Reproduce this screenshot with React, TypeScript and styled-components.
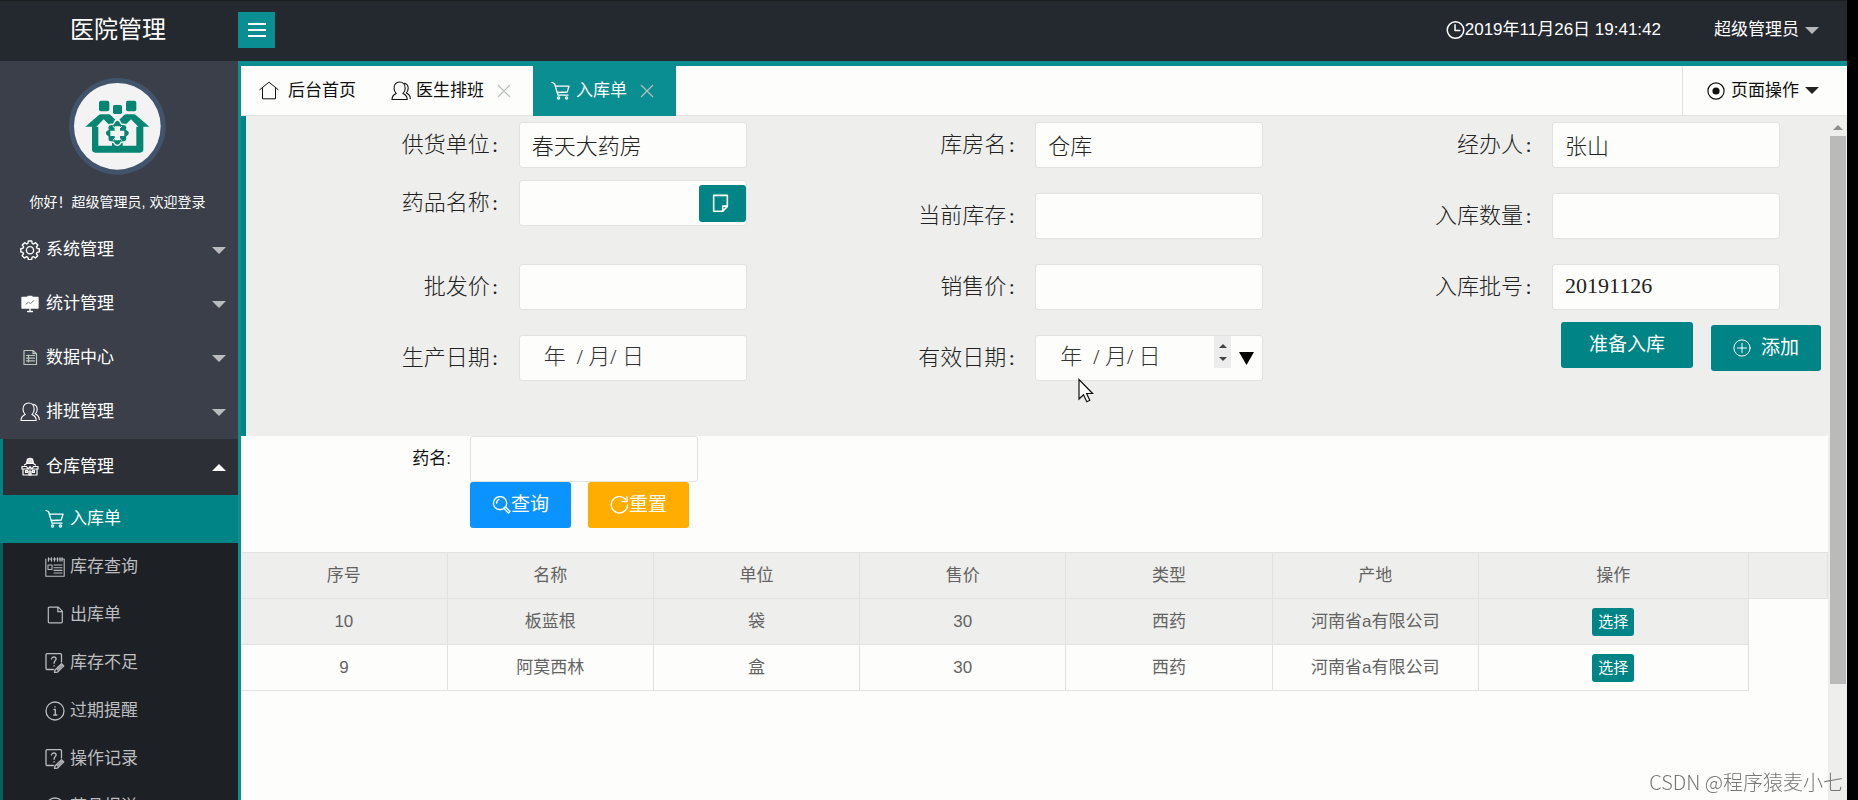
import React from 'react';
import styled, { createGlobalStyle } from 'styled-components';

const sans = '"Liberation Sans", "Noto Sans CJK SC", sans-serif';
const song = '"Liberation Serif", "Noto Sans CJK SC", serif';
const teal = '#008486';
const tealBright = '#0b8e92';
const paper = '#fdfdfb';
const panel = '#eeeeec';
const line = '#e2e2e0';

const GlobalStyle = createGlobalStyle`
  * { box-sizing: border-box; }
  body { margin: 0; background: #000; font-family: ${sans}; font-size: 17px; line-height: 24px; }
  button, input { font: inherit; margin: 0; }
  a { color: inherit; text-decoration: none; }
  svg { display: block; flex: none; }
`;

/* ---------- shell ---------- */

const Page = styled.div`
  display: flex;
  flex-direction: column;
  height: 100vh;
  overflow: hidden;
  border-right: 11px solid #000;
  background: ${paper};
`;

const Header = styled.header`
  display: flex;
  align-items: center;
  flex: none;
  height: 61px;
  padding-bottom: 2px;
  background: #24282f;
  border-top: 1px solid #1b1d20;
  color: #fff;
`;

const Brand = styled.h1`
  width: 238px;
  margin: 0;
  padding-right: 2px;
  font-size: 24px;
  line-height: 32px;
  font-weight: 400;
  text-align: center;
`;

const MenuToggle = styled.button`
  display: grid;
  place-items: center;
  width: 37px;
  height: 36px;
  padding: 0;
  border: 0;
  background: ${tealBright};
  color: #fff;
`;

const HeaderRight = styled.div`
  display: flex;
  align-items: center;
  margin-left: auto;
  padding-right: 28px;
  gap: 53px;
`;

const Clock = styled.time`
  display: flex;
  align-items: center;
`;

const Caret = styled.span<{ $up?: boolean; $color: string }>`
  width: 0;
  height: 0;
  border: 7px solid transparent;
  ${p => (p.$up
    ? `border-top-width: 0; border-bottom-color: ${p.$color};`
    : `border-bottom-width: 0; border-top-color: ${p.$color};`)}
`;

const PlainButton = styled.button`
  display: flex;
  align-items: center;
  gap: 6px;
  padding: 0;
  border: 0;
  background: none;
  color: inherit;
`;

const Body = styled.div`
  display: flex;
  flex: 1;
  min-height: 0;
`;

/* ---------- sidebar ---------- */

const Sidebar = styled.aside`
  flex: none;
  width: 238px;
  overflow: hidden;
  background: #3a3f49;
  color: #fff;
`;

const Profile = styled.div`
  display: flex;
  flex-direction: column;
  align-items: center;
  height: 162px;
  padding: 17px 3px 0 0;
  font-size: 14px;
`;

const Greeting = styled.p`
  margin: 15px 0 0;
`;

const Nav = styled.nav`
  display: flex;
  flex-direction: column;
`;

const NavItem = styled.a<{ $open?: boolean }>`
  display: flex;
  align-items: center;
  height: ${p => (p.$open ? 56 : 54)}px;
  gap: 6px;
  padding: 0 12px 0 ${p => (p.$open ? 17 : 20)}px;
  ${p => p.$open && `background: #2c2f35; border-left: 3px solid ${teal};`}

  ${Caret} { margin-left: auto; }
`;

const SubNav = styled.div`
  background: #1d2024;
  border-left: 3px solid #006261;
`;

const SubItem = styled.a<{ $active?: boolean }>`
  display: flex;
  align-items: center;
  height: 48px;
  gap: 5px;
  margin-left: ${p => (p.$active ? -3 : 0)}px;
  padding-left: ${p => (p.$active ? 45 : 42)}px;
  background: ${p => (p.$active ? teal : 'transparent')};
  color: ${p => (p.$active ? '#fff' : '#bcbdbf')};
`;

/* ---------- main ---------- */

const Main = styled.main`
  display: flex;
  flex-direction: column;
  flex: 1;
  min-width: 0;
  border-top: 5px solid ${tealBright};
  border-left: 3px solid ${tealBright};
`;

const TabBar = styled.div`
  display: flex;
  flex: none;
  height: 50px;
  border-bottom: 1px solid ${line};
`;

const Tab = styled.div<{ $active?: boolean; $home?: boolean }>`
  display: flex;
  align-items: center;
  gap: ${p => (p.$home ? 9 : 5)}px;
  height: 50px;
  padding: 0 ${p => (p.$home ? 17 : 22)}px 0 18px;
  background: ${p => (p.$active ? tealBright : 'transparent')};
  color: ${p => (p.$active ? '#fff' : '#111')};
`;

const TabClose = styled.button`
  display: grid;
  margin-left: 8px;
  padding: 0;
  border: 0;
  background: none;
  color: #b9bdbd;
`;

const PageActions = styled.div`
  display: flex;
  align-items: center;
  margin-left: auto;
  padding: 0 28px 0 24px;
  border-left: 1px solid ${line};
  color: #111;
`;

const Frame = styled.div`
  display: flex;
  flex: 1;
  min-height: 0;
`;

const Content = styled.div`
  flex: 1;
  min-width: 0;
  overflow: hidden;
`;

const ScrollTrack = styled.div`
  flex: none;
  display: flex;
  flex-direction: column;
  align-items: center;
  width: 19px;
  padding-top: 9px;
  background: ${panel};
  color: #8e8e8e;
`;

const ScrollThumb = styled.div`
  width: 16px;
  height: 548px;
  margin-top: 6px;
  background: #bababa;
`;

/* ---------- stock-in form ---------- */

const StockForm = styled.form`
  display: grid;
  grid-template-columns: repeat(3, 1fr);
  height: 320px;
  padding: 6px 17px 0 15px;
  border-left: 5px solid ${teal};
  border-bottom-right-radius: 3px;
  background: ${panel};
  font-family: ${song};
  font-size: 22px;
  line-height: 30px;
  font-weight: 300;
  color: #222;
`;

const FormColumn = styled.div`
  display: flex;
  flex-direction: column;
  align-items: flex-end;
  padding-right: 31px;
`;

const Field = styled.div<{ $gap?: number }>`
  position: relative;
  display: flex;
  align-items: center;
  height: 46px;
  margin-bottom: ${p => p.$gap ?? 25}px;
`;

const FieldLabel = styled.label`
  display: flex;
  padding-right: 18px;
`;

const Colon = styled.span`
  width: 11px;
  text-align: center;
`;

const InputBox = styled.div`
  display: flex;
  align-items: center;
  width: 228px;
  height: 46px;
  border: 1px solid ${line};
  border-radius: 3px;
  background: ${paper};
`;

const TextInput = styled.input<{ $indent?: number }>`
  flex: 1;
  min-width: 0;
  height: 44px;
  padding: 0 0 3px ${p => p.$indent ?? 12}px;
  border: 0;
  outline: 0;
  background: none;
  color: #222;

  &::placeholder { color: #333; opacity: 1; }
`;

const PickButton = styled.button`
  display: grid;
  place-items: center;
  width: 47px;
  height: 37px;
  padding: 0 3px 0 0;
  border: 0;
  border-radius: 3px;
  background: ${teal};
  color: #fff;
`;

const Stepper = styled.div`
  display: flex;
  flex-direction: column;
  align-items: center;
  align-self: flex-start;
  justify-content: space-around;
  width: 17px;
  height: 32px;
  padding: 3px 0;
  background: #ececec;
`;

const StepButton = styled.button`
  display: grid;
  padding: 2px;
  border: 0;
  background: none;
  color: #444;
`;

const DateDrop = styled.button`
  display: grid;
  margin: 0 8px;
  padding: 0;
  border: 0;
  background: none;
  color: #000;
`;

const Pointer = styled.svg`
  position: absolute;
  right: 168px;
  top: 43px;
`;

const FormActions = styled.div`
  display: flex;
  align-items: center;
  gap: 18px;
  margin: -16px -41px 0 0;
`;

const Button = styled.button<{ $bg: string; $width: number; $gap?: number; $drop?: boolean }>`
  display: flex;
  align-items: center;
  justify-content: center;
  gap: ${p => p.$gap ?? 0}px;
  width: ${p => p.$width}px;
  height: 46px;
  margin-top: ${p => (p.$drop ? 6 : 0)}px;
  padding: 0;
  border: 0;
  border-radius: 3px;
  background: ${p => p.$bg};
  color: #fff;
  font-family: ${sans};
  font-size: 19px;
  font-weight: 400;
  line-height: 26px;
`;

/* ---------- search + table ---------- */

const SearchForm = styled.form`
  display: grid;
  grid-template-columns: 210px auto;
  justify-content: start;
  column-gap: 19px;
  padding-bottom: 24px;
`;

const SearchLabel = styled.label`
  align-self: center;
  text-align: right;
  color: #111;
`;

const SearchButtons = styled.div`
  grid-column: 2;
  display: flex;
  gap: 17px;
`;

const Table = styled.table`
  width: 100%;
  table-layout: fixed;
  border-collapse: collapse;
  color: #636363;
  text-align: center;
`;

const Cell = styled.td`
  height: 46px;
  padding: 0;
  border: 1px solid ${line};
  border-left-width: 0;
`;

const HeadCell = styled(Cell).attrs({ as: 'th' })`
  font-weight: 400;
  background: ${panel};
`;

const Row = styled.tr<{ $shade?: boolean }>`
  background: ${p => (p.$shade ? panel : 'transparent')};
`;

const BlankCell = styled.td`
  background: ${paper};
`;

const SelectButton = styled.button`
  width: 42px;
  height: 28px;
  padding: 0;
  border: 0;
  border-radius: 3px;
  background: ${teal};
  color: #fff;
  font-size: 15px;
  line-height: 28px;
  vertical-align: middle;
`;

const Watermark = styled.div`
  position: fixed;
  right: 15px;
  bottom: 4px;
  font-family: "Noto Sans CJK SC", sans-serif;
  font-size: 20px;
  line-height: 28px;
  font-weight: 300;
  color: #777;
`;

/* ---------- icons ---------- */

type IconProps = { size?: number; w?: number; children: React.ReactNode };
const Icon = ({ size = 20, w = 1.3, children }: IconProps) => (
  <svg width={size} height={size} viewBox="0 0 20 20" fill="none" stroke="currentColor" strokeWidth={w} strokeLinejoin="round" strokeLinecap="round" aria-hidden="true">
    {children}
  </svg>
);

const GearIcon = () => (
  <Icon w={1.4}>
    <path d="M8.300 1h3.400l.5 2.400 1.300.6 2.100-1.300 2.200 2.300-1.300 2 .6 1.400 2.200.4v3.100l-2.300.5-.6 1.300 1.300 2.100-2.300 2.200-2-1.300-1.300.6-.5 2.300H8.400l-.5-2.300-1.400-.6-2 1.300-2.300-2.300 1.300-2-.6-1.300L.8 11.900V8.700l2.200-.5.6-1.300-1.300-2L4.600 2.700l2 1.300 1.300-.6z" />
    <circle cx="10" cy="10.200" r="3.600" />
  </Icon>
);
const BoardIcon = () => (
  <Icon>
    <path d="M2 3.500h16v10.500H2z" fill="currentColor" />
    <path d="M8 2.500h4" />
    <path d="M10 14v3.500M7.500 17.500h5" />
    <path d="M6 10.200l2.500-2 2 1.400L14 6.500" stroke="#777" strokeWidth="1" />
  </Icon>
);
const SheetIcon = () => (
  <Icon w={1.2}>
    <g stroke="#b9c4bd">
      <path d="M4 2.500h9l3.500 3.200v10.800H4zM13 2.500v3.200h3.500" />
      <path d="M6.500 7.500h8M6.500 10.200h8M6.500 12.900h8M8.500 7v7" />
    </g>
  </Icon>
);
const PeopleIcon = () => (
  <Icon w={1.1}>
    <path d="M1 18.500c0-3.300 1.300-4.700 4.300-5.900C3.800 11.200 3 9.500 3 7.300 3 3.500 5.300 1 8.600 1s5.600 2.500 5.600 6.300c0 2.200-.8 3.900-2.300 5.300 3 1.200 4.300 2.600 4.300 5.900z" />
    <path d="M13.500 2.200c2.500.7 3.700 2.600 3.700 5.100 0 2-.7 3.500-1.900 4.600 2.700 1.100 4 2.600 4 5.600" />
  </Icon>
);
const StoreIcon = () => (
  <Icon w={1.200}>
    <path d="M7.500 2l2.500-.8 2.500.8 1 4.500h-7z" fill="#ddd" />
    <path d="M4.500 8l2-1.500h7l2 1.500M2 9.500h4.500L8 12l2-2.500 2 2.500 1.500-2.500H18v2.500H2zM3 12v6h14v-6" />
    <path d="M5.500 13.500h2v2h-2zM12.500 13.500h2v2h-2zM9 14h2v4H9z" fill="#999" />
  </Icon>
);
const CartIcon = ({ size = 20 }: { size?: number }) => (
  <Icon size={size} w={1.300}>
    <path d="M1 1.500l2.500 1 3.500 11.700h10M4.500 5.200H18l-1.800 5.800-10 .5" />
    <circle cx="7.500" cy="17" r="1.100" />
    <circle cx="15.500" cy="17" r="1.100" />
  </Icon>
);
const LedgerIcon = () => (
  <Icon w={1.100}>
    <path d="M.8 2v17.200h18.400V2H17M3.500 2h2M8.500 2h2.500M14 2h1" />
    <path d="M3.500 1v3M6.500 1v3M9.500 1v3M12.500 1v3M15 1v3M17 1v3" strokeWidth="1.300" />
    <path d="M3 8h4v4.500H3zM9 8h8M9 10.700h8M9 13.400h8M9 16h8" />
  </Icon>
);
const FileIcon = () => (
  <Icon w={1.200}>
    <path d="M4.300 2.200h9l4 4v10.600c0 .6-.4 1-1 1h-12c-.6 0-1-.4-1-1V3.200c0-.6.400-1 1-1zM12.800 2.500v4.200h4.200" />
  </Icon>
);
const QuestionIcon = () => (
  <Icon w={1.300}>
    <path d="M8.500 16.500H2c-.6 0-1-.4-1-1V1.700c0-.6.400-1 1-1h13.500c.6 0 1 .4 1 1V9M6.500 6c.2-1.400 1-2 2.300-2 1.400 0 2.300.8 2.300 2 0 1.600-2 1.900-2 3.700v.6M9.100 12.700v.4" />
    <path d="M10 17l6.500-6.300 2.300 2.200-6.500 6.300-2.800.3zM12.500 16.800l4.500-4.300" />
  </Icon>
);
const InfoIcon = () => (
  <Icon w={1.300}>
    <circle cx="10" cy="10" r="9" />
    <path d="M9 8.500h1.300v5.500M8.700 14h3.200M10 5.700v.3" />
  </Icon>
);
const HomeIcon = () => (
  <Icon w={1}>
    <path d="M.8 8.700L10 1.200l9.200 7.500M3.500 7.500v10.300h13V7.500" />
  </Icon>
);
const CloseIcon = () => (
  <svg width="14" height="14" viewBox="0 0 14 14" fill="none" stroke="currentColor" strokeWidth="1.200" aria-hidden="true">
    <path d="M1 1l12 12M13 1l-12 12" />
  </svg>
);
const ClockIcon = () => (
  <Icon size={19} w={1.600}>
    <circle cx="10" cy="9.500" r="8.700" />
    <path d="M9.500 4v6h5" />
  </Icon>
);
const TargetIcon = () => (
  <Icon size={18} w={1.300}>
    <circle cx="10" cy="10" r="9" />
    <circle cx="10" cy="10" r="4" fill="currentColor" stroke="none" />
  </Icon>
);
const BarsIcon = () => (
  <svg width="18" height="16" viewBox="0 0 18 16" fill="none" stroke="currentColor" strokeWidth="2" aria-hidden="true">
    <path d="M0 2h18M0 8h18M0 14h18" />
  </svg>
);
const NoteIcon = () => (
  <Icon size={19} w={1.700}>
    <path d="M2.800 1.500h14.400v11.500l-4.700 5.200H2.800zM17 12.800h-4.600v5" />
  </Icon>
);
const PlusIcon = () => (
  <Icon size={18} w={1.100}>
    <circle cx="10" cy="10" r="9" />
    <path d="M10 5v10M5 10h10" />
  </Icon>
);
const SearchIcon = () => (
  <Icon size={19} w={1.400}>
    <circle cx="8.500" cy="7.500" r="7" />
    <path d="M4.800 7.500c0-2 .9-3.300 2.500-4M13 12.200l1-.8 5 4.800-1.700 1.700-4.500-4.600z" />
  </Icon>
);
const RefreshIcon = () => (
  <Icon size={19} w={1.500}>
    <path d="M18.500 9.500A8.600 8.600 0 1 1 16.300 3.500M18 .8v5h-5.200" />
  </Icon>
);
const Triangle = ({ w, h, up }: { w: number; h: number; up?: boolean }) => (
  <svg width={w} height={h} viewBox="0 0 10 10" preserveAspectRatio="none" fill="currentColor" aria-hidden="true">
    <path d={up ? 'M0 10h10L5 0z' : 'M0 0h10L5 10z'} />
  </svg>
);

const Avatar = () => (
  <svg width="97" height="97" viewBox="9 11 291 291" role="img" aria-label="头像">
    <circle cx="154" cy="156" r="145" fill="#41546b" />
    <circle cx="154" cy="156" r="130" fill="#f3f3f3" />
    <g fill="#048673">
      <rect x="99" y="79" width="31" height="32" rx="6" />
      <rect x="141" y="92" width="27" height="27" rx="5" />
      <rect x="180" y="79" width="31" height="32" rx="6" />
      <path d="M58 157l38-33q4-4 12-4h18q6 0 10 4l18 18 18-18q4-4 10-4h20q6 0 10 4l38 33h-18v68q0 10-10 10H88q-10 0-10-10v-68z" />
    </g>
    <g fill="#f3f3f3">
      <path d="M91 157l22-22 20 20-13 22 18 30v7H97v-57z" />
      <path d="M217 157l-22-22-20 20 13 22-18 30v7h41v-57z" />
      <path d="M136 119h36l-18 20z" />
    </g>
    <path d="M154 137q7 0 10 9l3 4q14-2 16 8l-1 8q12 5 7 15l-7 7q3 14-9 15l-8 1q-3 9-11 9t-11-9l-8-1q-12-1-9-15l-7-7q-5-10 7-15l-1-8q2-10 16-8l3-4q3-9 10-9z" fill="#048673" stroke="#f3f3f3" strokeWidth="4" />
    <path d="M146 156h16v13h13v16h-13v13h-16v-13h-13v-16h13z" fill="#f3f3f3" />
    <path d="M140 155l8 8M168 155l-8 8M140 199l8-8M168 199l-8-8" stroke="#f3f3f3" strokeWidth="3" />
  </svg>
);

/* ---------- data ---------- */

const menu = [
  { name: '系统管理', icon: <GearIcon /> },
  { name: '统计管理', icon: <BoardIcon /> },
  { name: '数据中心', icon: <SheetIcon /> },
  { name: '排班管理', icon: <PeopleIcon /> },
];

const subMenu = [
  { name: '入库单', icon: <CartIcon />, active: true },
  { name: '库存查询', icon: <LedgerIcon /> },
  { name: '出库单', icon: <FileIcon /> },
  { name: '库存不足', icon: <QuestionIcon /> },
  { name: '过期提醒', icon: <InfoIcon /> },
  { name: '操作记录', icon: <QuestionIcon /> },
  { name: '药品报溢', icon: <InfoIcon /> },
];

const widths = ['13%', '13%', '13%', '13%', '13%', '13%', '17%', '5%'];
const heads = ['序号', '名称', '单位', '售价', '类型', '产地', '操作'];
const rows = [
  ['10', '板蓝根', '袋', '30', '西药', '河南省a有限公司'],
  ['9', '阿莫西林', '盒', '30', '西药', '河南省a有限公司'],
];

type FormFieldProps = {
  id: string;
  label: string;
  value?: string;
  gap?: number;
  date?: boolean;
  after?: React.ReactNode;
  over?: React.ReactNode;
};

const FormField = ({ id, label, value, gap, date, after, over }: FormFieldProps) => (
  <Field $gap={gap}>
    <FieldLabel htmlFor={id}>{label}<Colon>:</Colon></FieldLabel>
    <InputBox>
      <TextInput id={id} defaultValue={value} $indent={date ? 24 : 12} placeholder={date ? '年  / 月/ 日' : undefined} />
      {after}
    </InputBox>
    {over}
  </Field>
);

export default function App() {
  return (
    <Page>
      <GlobalStyle />
      <Header>
        <Brand>医院管理</Brand>
        <MenuToggle type="button" aria-label="折叠菜单"><BarsIcon /></MenuToggle>
        <HeaderRight>
          <Clock><ClockIcon />2019年11月26日 19:41:42</Clock>
          <PlainButton type="button">超级管理员<Caret $color="#b5b7ba" /></PlainButton>
        </HeaderRight>
      </Header>
      <Body>
        <Sidebar>
          <Profile>
            <Avatar />
            <Greeting>你好！超级管理员, 欢迎登录</Greeting>
          </Profile>
          <Nav>
            {menu.map(m => (
              <NavItem key={m.name} href="#">{m.icon}{m.name}<Caret $color="#b9bbbe" /></NavItem>
            ))}
            <NavItem href="#" $open><StoreIcon />仓库管理<Caret $up $color="#fff" /></NavItem>
            <SubNav>
              {subMenu.map(s => (
                <SubItem key={s.name} href="#" $active={s.active}>{s.icon}{s.name}</SubItem>
              ))}
            </SubNav>
          </Nav>
        </Sidebar>
        <Main>
          <TabBar>
            <Tab $home><HomeIcon />后台首页</Tab>
            <Tab><PeopleIcon />医生排班<TabClose type="button" aria-label="关闭"><CloseIcon /></TabClose></Tab>
            <Tab $active><CartIcon />入库单<TabClose type="button" aria-label="关闭"><CloseIcon /></TabClose></Tab>
            <PageActions>
              <PlainButton type="button"><TargetIcon />页面操作<Caret $color="#222" /></PlainButton>
            </PageActions>
          </TabBar>
          <Frame>
            <Content>
              <StockForm onSubmit={e => e.preventDefault()}>
                <FormColumn>
                  <FormField id="supplier" label="供货单位" value="春天大药房" gap={12} />
                  <FormField
                    id="drug"
                    label="药品名称"
                    gap={38}
                    after={<PickButton type="button" aria-label="选择药品"><NoteIcon /></PickButton>}
                  />
                  <FormField id="wholesale" label="批发价" />
                  <FormField id="made" label="生产日期" date />
                </FormColumn>
                <FormColumn>
                  <FormField id="store" label="库房名" value="仓库" />
                  <FormField id="stock" label="当前库存" />
                  <FormField id="price" label="销售价" />
                  <FormField
                    id="expiry"
                    label="有效日期"
                    date
                    after={
                      <>
                        <Stepper>
                          <StepButton type="button" aria-label="增加"><Triangle w={8} h={4} up /></StepButton>
                          <StepButton type="button" aria-label="减少"><Triangle w={8} h={4} /></StepButton>
                        </Stepper>
                        <DateDrop type="button" aria-label="打开日历"><Triangle w={15} h={13} /></DateDrop>
                      </>
                    }
                    over={
                      <Pointer width="18" height="26" viewBox="0 0 18 26" aria-hidden="true">
                        <path d="M2 1.500v19.500l4.500-4.300 3.300 7 3-1.400-3.200-6.800h6z" fill="#fff" stroke="#111" strokeWidth="1.200" />
                      </Pointer>
                    }
                  />
                </FormColumn>
                <FormColumn>
                  <FormField id="agent" label="经办人" value="张山" />
                  <FormField id="count" label="入库数量" />
                  <FormField id="batch" label="入库批号" value="20191126" />
                  <FormActions>
                    <Button type="button" $bg={teal} $width={132}>准备入库</Button>
                    <Button type="button" $bg={teal} $width={110} $gap={10} $drop><PlusIcon />添加</Button>
                  </FormActions>
                </FormColumn>
              </StockForm>
              <SearchForm onSubmit={e => e.preventDefault()}>
                <SearchLabel htmlFor="name">药名:</SearchLabel>
                <InputBox><TextInput id="name" /></InputBox>
                <SearchButtons>
                  <Button type="submit" $bg="#0b93ff" $width={101}><SearchIcon />查询</Button>
                  <Button type="reset" $bg="#ffae00" $width={101}><RefreshIcon />重置</Button>
                </SearchButtons>
              </SearchForm>
              <Table>
                <colgroup>{widths.map((w, i) => <col key={i} width={w} />)}</colgroup>
                <thead>
                  <tr>
                    {heads.map(h => <HeadCell key={h}>{h}</HeadCell>)}
                    <HeadCell />
                  </tr>
                </thead>
                <tbody>
                  {rows.map((r, i) => (
                    <Row key={r[0]} $shade={i === 0}>
                      {r.map((c, j) => <Cell key={j}>{c}</Cell>)}
                      <Cell><SelectButton type="button">选择</SelectButton></Cell>
                      <BlankCell />
                    </Row>
                  ))}
                </tbody>
              </Table>
            </Content>
            <ScrollTrack>
              <Triangle w={10} h={5} up />
              <ScrollThumb />
            </ScrollTrack>
          </Frame>
        </Main>
      </Body>
      <Watermark>CSDN @程序猿麦小七</Watermark>
    </Page>
  );
}
